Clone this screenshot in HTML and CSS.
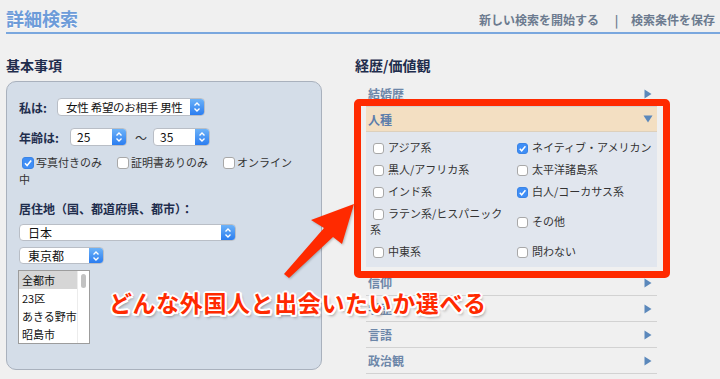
FILE: index.html
```html
<!DOCTYPE html>
<html lang="ja">
<head>
    <meta charset="UTF-8">
    <meta name="viewport" content="width=device-width, initial-scale=1.0">
    <title>詳細検索</title>
    <link rel="stylesheet" href="styles.css">
</head>
<body>
    <div class="header">
        <h1 class="title">詳細検索</h1>
        <div class="header-links">
            <a href="#">新しい検索を開始する</a>
            <span class="sep">|</span>
            <a href="#">検索条件を保存</a>
        </div>
    </div>

    <div class="main">
        <div class="col-left">
            <h2 class="section-title">基本事項</h2>
            <div class="panel">
                <div class="form-row">
                    <span class="label label-who">私は:</span>
                    <div class="select select-who">
                        <span class="select-text">女性 希望のお相手 男性</span>
                        <span class="select-btn"><svg width="8" height="12" viewBox="0 0 8 12"><path d="M1.5 4.6 L4 2.1 L6.5 4.6 M1.5 7.4 L4 9.9 L6.5 7.4" fill="none" stroke="#fff" stroke-width="1.4"/></svg></span>
                    </div>
                </div>
                <div class="form-row row-age">
                    <span class="label label-age">年齢は:</span>
                    <div class="select select-age">
                        <span class="select-text">25</span>
                        <span class="select-btn"><svg width="8" height="12" viewBox="0 0 8 12"><path d="M1.5 4.6 L4 2.1 L6.5 4.6 M1.5 7.4 L4 9.9 L6.5 7.4" fill="none" stroke="#fff" stroke-width="1.4"/></svg></span>
                    </div>
                    <span class="tilde">〜</span>
                    <div class="select select-age">
                        <span class="select-text">35</span>
                        <span class="select-btn"><svg width="8" height="12" viewBox="0 0 8 12"><path d="M1.5 4.6 L4 2.1 L6.5 4.6 M1.5 7.4 L4 9.9 L6.5 7.4" fill="none" stroke="#fff" stroke-width="1.4"/></svg></span>
                    </div>
                </div>
                <div class="checks"><span class="cb cb-on"><svg width="12" height="12" viewBox="0 0 12 12"><path d="M3 6.3 L5.1 8.5 L9.2 3.6" fill="none" stroke="#fff" stroke-width="1.6"/></svg></span><span class="check-text">写真付きのみ</span><span class="cb"></span><span class="check-text">証明書ありのみ</span><span class="cb"></span><span class="check-text">オンライン</span>中</div>
                <div class="label label-area">居住地（国、都道府県、都市）：</div>
                <div class="select select-country">
                    <span class="select-text">日本</span>
                    <span class="select-btn"><svg width="8" height="12" viewBox="0 0 8 12"><path d="M1.5 4.6 L4 2.1 L6.5 4.6 M1.5 7.4 L4 9.9 L6.5 7.4" fill="none" stroke="#fff" stroke-width="1.4"/></svg></span>
                </div>
                <div class="select select-pref">
                    <span class="select-text">東京都</span>
                    <span class="select-btn"><svg width="8" height="12" viewBox="0 0 8 12"><path d="M1.5 4.6 L4 2.1 L6.5 4.6 M1.5 7.4 L4 9.9 L6.5 7.4" fill="none" stroke="#fff" stroke-width="1.4"/></svg></span>
                </div>
                <div class="listbox">
                    <ul class="list-items">
                        <li class="selected">全都市</li>
                        <li>23区</li>
                        <li>あきる野市</li>
                        <li>昭島市</li>
                    </ul>
                    <div class="scrollbar"><div class="thumb"></div></div>
                </div>
            </div>
        </div>

        <div class="col-right">
            <h2 class="section-title">経歴/価値観</h2>
            <div class="acc">
                <div class="acc-row">結婚歴<svg class="tri" width="8" height="10" viewBox="0 0 8 10"><path d="M0.5 0.5 L7.5 5 L0.5 9.5 Z" fill="#5b88bb"/></svg></div>
                <div class="acc-head">人種<svg class="tri" width="10" height="8" viewBox="0 0 10 8"><path d="M0.5 0.5 L9.5 0.5 L5 7.5 Z" fill="#5b88bb"/></svg></div>
                <div class="acc-body">
                    <table class="check-table">
                        <tr>
                            <td class="cell-left"><span class="cb"></span><span class="check-text">アジア系</span></td>
                            <td class="cell-right"><span class="cb cb-on"><svg width="11" height="11" viewBox="0 0 12 12"><path d="M3 6.3 L5.1 8.5 L9.2 3.6" fill="none" stroke="#fff" stroke-width="1.6"/></svg></span><span class="check-text">ネイティブ・アメリカン</span></td>
                        </tr>
                        <tr>
                            <td class="cell-left"><span class="cb"></span><span class="check-text">黒人/アフリカ系</span></td>
                            <td class="cell-right"><span class="cb"></span><span class="check-text">太平洋諸島系</span></td>
                        </tr>
                        <tr>
                            <td class="cell-left"><span class="cb"></span><span class="check-text">インド系</span></td>
                            <td class="cell-right"><span class="cb cb-on"><svg width="11" height="11" viewBox="0 0 12 12"><path d="M3 6.3 L5.1 8.5 L9.2 3.6" fill="none" stroke="#fff" stroke-width="1.6"/></svg></span><span class="check-text">白人/コーカサス系</span></td>
                        </tr>
                        <tr>
                            <td class="cell-left"><span class="cb"></span><span class="check-text">ラテン系/ヒスパニック系</span></td>
                            <td class="cell-right"><span class="cb"></span><span class="check-text">その他</span></td>
                        </tr>
                        <tr>
                            <td class="cell-left"><span class="cb"></span><span class="check-text">中東系</span></td>
                            <td class="cell-right"><span class="cb"></span><span class="check-text">問わない</span></td>
                        </tr>
                    </table>
                </div>
                <div class="acc-row">信仰<svg class="tri" width="8" height="10" viewBox="0 0 8 10"><path d="M0.5 0.5 L7.5 5 L0.5 9.5 Z" fill="#5b88bb"/></svg></div>
                <div class="acc-row">学歴<svg class="tri" width="8" height="10" viewBox="0 0 8 10"><path d="M0.5 0.5 L7.5 5 L0.5 9.5 Z" fill="#5b88bb"/></svg></div>
                <div class="acc-row">言語<svg class="tri" width="8" height="10" viewBox="0 0 8 10"><path d="M0.5 0.5 L7.5 5 L0.5 9.5 Z" fill="#5b88bb"/></svg></div>
                <div class="acc-row">政治観<svg class="tri" width="8" height="10" viewBox="0 0 8 10"><path d="M0.5 0.5 L7.5 5 L0.5 9.5 Z" fill="#5b88bb"/></svg></div>
            </div>
        </div>
    </div>

    <!-- annotation drawn over the page -->
    <div class="callout-box"></div>
    <svg class="callout-arrow" width="80" height="85" viewBox="280 198 80 85">
        <path d="M354 204 L311 220 L324 228 L284 274 L289 278 L333 237 L342 244 Z" fill="#ff2a00"/>
    </svg>
    <div class="callout-text">どんな外国人と出会いたいか選べる</div>
</body>
</html>
```

FILE: styles.css
```css
body {
    margin: 0;
    background-color: #f0f0f0;
    font-family: "Noto Sans CJK JP", "Liberation Sans", sans-serif;
    color: #222;
    position: relative;
    height: 379px;
    overflow: hidden;
}

.header {
    display: flex;
    justify-content: space-between;
    align-items: center;
    margin-left: 6px;
    height: 28px;
    padding-top: 4px;
    border-bottom: 2px solid #7aa7de;
}
.title {
    margin: 0;
    font-size: 18px;
    line-height: 22px;
    font-weight: bold;
    color: #6d9cd9;
    text-shadow: 0 1px 1px rgba(255,255,255,0.8);
}
.header-links {
    padding-top: 3px;
    padding-right: 5px;
    font-size: 12px;
    font-weight: bold;
    color: #6c7b8f;
}
.header-links a { color: #6c7b8f; text-decoration: none; }
.header-links .sep { margin: 0 10px 0 13px; }

.main { display: flex; padding-top: 22px; }
.col-left { margin-left: 6px; width: 316px; }
.col-right { margin-left: 33px; width: 316px; }

.section-title {
    margin: 0 0 7px 0;
    font-size: 14px;
    line-height: 18px;
    font-weight: bold;
    color: #1f2d4d;
}

.panel {
    box-sizing: border-box;
    height: 289px;
    background: #d4dde8;
    border: 1px solid #a9b1bd;
    border-radius: 10px;
    padding: 16px 24px 0 12px;
}
.form-row { display: flex; align-items: center; height: 18px; }
.row-age { margin-top: 12px; }
.label {
    font-size: 12px;
    font-weight: bold;
    color: #1f2d4d;
}
.label-who { width: 38px; }
.label-age { width: 51px; }
.tilde { font-size: 12px; margin: 0 6px 0 8px; color: #333; }

.select {
    box-sizing: border-box;
    display: flex;
    height: 18px;
    background: #fff;
    border: 1px solid #b9bec6;
    border-radius: 4px;
    overflow: hidden;
    font-size: 12px;
    color: #111;
}
.select-text { flex: 1; padding-left: 8px; line-height: 16px; white-space: nowrap; }
.select-btn {
    width: 14px;
    display: flex;
    align-items: center;
    justify-content: center;
    background: linear-gradient(#6cb2f8, #2b7df0);
}
.select-who { width: 148px; }
.select-who .select-text { font-size: 11.5px; letter-spacing: -0.3px; }
.select-age { width: 57px; }
.select-age .select-text { padding-left: 6px; }
.select-country { width: 217px; height: 17px; margin-top: 7px; }
.select-pref { width: 85px; height: 17px; margin-top: 6px; }

.checks {
    margin-top: 8px;
    font-size: 11px;
    line-height: 17px;
    color: #333;
}
.checks .cb { width: 12px; height: 12px; margin-left: 3px; margin-right: 2px; }
.checks .check-text { margin-right: 12px; }
.checks .check-text:last-of-type { margin-right: 0; }

.cb {
    box-sizing: border-box;
    display: inline-block;
    width: 11px;
    height: 11px;
    vertical-align: -2px;
    background: #fff;
    border: 1px solid #a8a8a8;
    border-radius: 3px;
}
.cb svg { display: block; margin: -1px; }
.cb-on { background: #3f8ef6; border-color: #3a84e6; }

.label-area { margin-top: 12px; line-height: 17px; }

.listbox {
    display: flex;
    width: 72px;
    height: 74px;
    box-sizing: border-box;
    margin-top: 6px;
    margin-left: -1px;
    background: #fff;
    border: 1px solid #9c9c9c;
}
.list-items {
    flex: 1;
    list-style: none;
    margin: 0;
    padding: 0;
    font-size: 11px;
    line-height: 18px;
    color: #111;
}
.list-items li { padding-left: 3px; white-space: nowrap; }
.list-items .selected { background: #d6d6d6; }
.scrollbar { width: 11px; border-left: 1px solid #ececec; }
.thumb { width: 5px; height: 14px; margin: 3px 0 0 3px; background: #c2c2c2; border-radius: 3px; }

.acc { width: 291px; margin-left: 11px; margin-top: 1px; }
.acc-row {
    display: flex;
    justify-content: space-between;
    align-items: center;
    height: 25px;
    padding: 0 5px 0 2px;
    border-bottom: 1px solid #d2d2d2;
    font-size: 12px;
    font-weight: bold;
    color: #6d87a9;
}
.acc-head {
    display: flex;
    justify-content: space-between;
    align-items: center;
    height: 24px;
    padding: 0 4px 0 2px;
    background: #f3dfc2;
    border-bottom: 1px solid #ddd0bc;
    font-size: 12px;
    font-weight: bold;
    color: #5b7dab;
}
.acc-body {
    background: #e1e6ee;
    padding: 4px 0 5px 0;
    margin-bottom: 3px;
}
.check-table { border-collapse: collapse; width: 291px; table-layout: fixed; }
.check-table td {
    padding: 3px 0;
    font-size: 11px;
    line-height: 16px;
    color: #333;
    vertical-align: middle;
}
.cell-left { width: 140px; padding-left: 4px !important; padding-right: 2px !important; }
.cell-right { padding-left: 2px !important; white-space: nowrap; }
.check-table .cb { margin-left: 3px; margin-right: 4px; }

.callout-box {
    position: absolute;
    left: 354px;
    top: 99px;
    width: 316px;
    height: 179px;
    box-sizing: border-box;
    border: 7px solid #ff2a00;
    border-radius: 5px;
}
.callout-arrow {
    position: absolute;
    left: 280px;
    top: 198px;
    filter: drop-shadow(1px 1px 1px rgba(0,0,0,0.25));
}
.callout-text {
    position: absolute;
    left: 109px;
    top: 288px;
    font-size: 23px;
    line-height: 28px;
    font-weight: bold;
    letter-spacing: 0.6px;
    color: #ff2a00;
    white-space: nowrap;
    text-shadow:
        2px 0 0 #fff, -2px 0 0 #fff, 0 2px 0 #fff, 0 -2px 0 #fff,
        1.5px 1.5px 0 #fff, -1.5px 1.5px 0 #fff, 1.5px -1.5px 0 #fff, -1.5px -1.5px 0 #fff,
        2px 3px 3px rgba(0,0,0,0.35);
}
```
